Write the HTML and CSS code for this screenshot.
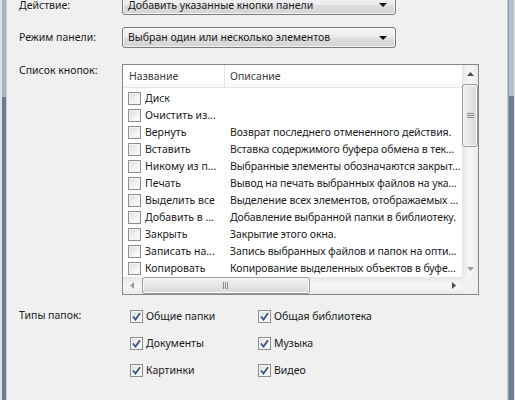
FILE: index.html
```html
<!DOCTYPE html>
<html lang="ru">
<head>
<meta charset="utf-8">
<link rel="stylesheet" href="styles.css">
</head>
<body>
<div class="window">
  <div class="frame frame-left"></div>
  <div class="content">
    <div class="row row-action">
      <div class="label">Действие:</div>
      <div class="combo"><span class="combo-text">Добавить указанные кнопки панели</span><span class="arrow"></span></div>
    </div>
    <div class="row row-mode">
      <div class="label">Режим панели:</div>
      <div class="combo"><span class="combo-text">Выбран один или несколько элементов</span><span class="arrow"></span></div>
    </div>
    <div class="row row-list">
      <div class="label label-top">Список кнопок:</div>
      <div class="listview">
        <div class="lv-main">
          <div class="lv-header">
            <div class="col-name hdr">Название</div>
            <div class="col-desc hdr">Описание</div>
          </div>
          <div class="lv-rows">
            <div class="lv-row"><div class="col-name"><span class="cb"></span>Диск</div><div class="col-desc"></div></div>
            <div class="lv-row"><div class="col-name"><span class="cb"></span>Очистить из...</div><div class="col-desc"></div></div>
            <div class="lv-row"><div class="col-name"><span class="cb"></span>Вернуть</div><div class="col-desc">Возврат последнего отмененного действия.</div></div>
            <div class="lv-row"><div class="col-name"><span class="cb"></span>Вставить</div><div class="col-desc">Вставка содержимого буфера обмена в тек...</div></div>
            <div class="lv-row"><div class="col-name"><span class="cb"></span>Никому из п...</div><div class="col-desc">Выбранные элементы обозначаются закрыт...</div></div>
            <div class="lv-row"><div class="col-name"><span class="cb"></span>Печать</div><div class="col-desc">Вывод на печать выбранных файлов на ука...</div></div>
            <div class="lv-row"><div class="col-name"><span class="cb"></span>Выделить все</div><div class="col-desc">Выделение всех элементов, отображаемых ...</div></div>
            <div class="lv-row"><div class="col-name"><span class="cb"></span>Добавить в ...</div><div class="col-desc">Добавление выбранной папки в библиотеку.</div></div>
            <div class="lv-row"><div class="col-name"><span class="cb"></span>Закрыть</div><div class="col-desc">Закрытие этого окна.</div></div>
            <div class="lv-row"><div class="col-name"><span class="cb"></span>Записать на...</div><div class="col-desc">Запись выбранных файлов и папок на опти...</div></div>
            <div class="lv-row"><div class="col-name"><span class="cb"></span>Копировать</div><div class="col-desc">Копирование выделенных объектов в буфе...</div></div>
          </div>
        </div>
        <div class="vscroll">
          <div class="sb-btn"><svg width="7" height="4" viewBox="0 0 7 4"><path d="M0 4 L3.5 0 L7 4 Z" fill="#4d4d4d"/></svg></div>
          <div class="vthumb"><svg width="7" height="6" viewBox="0 0 7 6"><path d="M0 0.5H7M0 2.5H7M0 4.5H7" stroke="#8a8a8a" stroke-width="1"/></svg></div>
          <div class="vtrack"></div>
          <div class="sb-btn"><svg width="7" height="4" viewBox="0 0 7 4"><path d="M0 0 L3.5 4 L7 0 Z" fill="#9a9a9a"/></svg></div>
        </div>
        <div class="hscroll">
          <div class="sb-btn"><svg width="4" height="7" viewBox="0 0 4 7"><path d="M4 0 L0 3.5 L4 7 Z" fill="#9a9a9a"/></svg></div>
          <div class="hthumb"><svg width="6" height="7" viewBox="0 0 6 7"><path d="M0.5 0V7M2.5 0V7M4.5 0V7" stroke="#8a8a8a" stroke-width="1"/></svg></div>
          <div class="htrack"></div>
          <div class="sb-btn"><svg width="4" height="7" viewBox="0 0 4 7"><path d="M0 0 L4 3.5 L0 7 Z" fill="#4d4d4d"/></svg></div>
        </div>
        <div class="corner"></div>
      </div>
    </div>
    <div class="row row-types">
      <div class="label label-top">Типы папок:</div>
      <div class="types">
        <div class="chk"><span class="cb on"><svg width="9" height="9" viewBox="0 0 9 9"><path d="M1 4.5 L3.5 7.5 L8 1.2" fill="none" stroke="#3b5580" stroke-width="1.8"/></svg></span>Общие папки</div>
        <div class="chk"><span class="cb on"><svg width="9" height="9" viewBox="0 0 9 9"><path d="M1 4.5 L3.5 7.5 L8 1.2" fill="none" stroke="#3b5580" stroke-width="1.8"/></svg></span>Общая библиотека</div>
        <div class="chk"><span class="cb on"><svg width="9" height="9" viewBox="0 0 9 9"><path d="M1 4.5 L3.5 7.5 L8 1.2" fill="none" stroke="#3b5580" stroke-width="1.8"/></svg></span>Документы</div>
        <div class="chk"><span class="cb on"><svg width="9" height="9" viewBox="0 0 9 9"><path d="M1 4.5 L3.5 7.5 L8 1.2" fill="none" stroke="#3b5580" stroke-width="1.8"/></svg></span>Музыка</div>
        <div class="chk"><span class="cb on"><svg width="9" height="9" viewBox="0 0 9 9"><path d="M1 4.5 L3.5 7.5 L8 1.2" fill="none" stroke="#3b5580" stroke-width="1.8"/></svg></span>Картинки</div>
        <div class="chk"><span class="cb on"><svg width="9" height="9" viewBox="0 0 9 9"><path d="M1 4.5 L3.5 7.5 L8 1.2" fill="none" stroke="#3b5580" stroke-width="1.8"/></svg></span>Видео</div>
      </div>
    </div>
  </div>
  <div class="frame frame-right"></div>
</div>
</body>
</html>
```

FILE: styles.css
```css
* { box-sizing: border-box; }
html, body { margin: 0; padding: 0; }
body {
  width: 515px;
  height: 400px;
  overflow: hidden;
  background: #f0f0f0;
  font-family: "Noto Sans", "DejaVu Sans", sans-serif;
  font-size: 10.5px;
  color: #1a1a1a;
}
.window {
  display: flex;
  height: 400px;
}
.frame {
  width: 8px;
  flex: none;
}
.frame-left {
  background:
    linear-gradient(to right, #dfe3e9 0, #dfe3e9 2px, transparent 2px, transparent 6px, #c9d0da 6px, #c9d0da 7px, #f0f0f0 7px),
    linear-gradient(to bottom, #a9b5c6 0, #a9b5c6 97px, #6c7b92 97px, #6c7b92 100%);
}
.frame-right {
  background:
    linear-gradient(to right, #c3cad4 0, #c3cad4 1px, #8e9aab 1px, #8e9aab 2px, transparent 2px, transparent 7px, #dfe3e9 7px),
    linear-gradient(to bottom, #b4c0d0 0, #b4c0d0 96px, #6f7f97 96px, #6f7f97 100%);
}
.content {
  flex: 1;
  display: flex;
  flex-direction: column;
}
.row {
  display: flex;
  align-items: center;
}
.label {
  width: 114px;
  flex: none;
  padding-left: 11px;
  line-height: 15px;
}
.label-top { align-self: flex-start; }
.row-action { margin-top: -5px; }
.row-action .label { margin-top: 1px; }
.row-mode { margin-top: 12px; }
.row-list { margin-top: 16px; }
.row-list .label-top { margin-top: -1px; }
.row-types { margin-top: 14px; align-items: flex-start; }
.row-types .label-top { margin-top: -1px; }

.combo {
  width: 274px;
  height: 21px;
  border: 1px solid #7a7a7a;
  border-radius: 3px;
  background: linear-gradient(to bottom, #f4f4f4 0%, #ececec 48%, #dedede 52%, #d4d4d4 100%);
  box-shadow: inset 0 0 0 1px rgba(255,255,255,0.7);
  display: flex;
  align-items: center;
  justify-content: space-between;
  padding: 0 5px 0 5px;
}
.row-action .combo { height: 20px; }
.combo-text { line-height: 15px; }
.arrow {
  width: 0;
  height: 0;
  border-left: 4px solid transparent;
  border-right: 4px solid transparent;
  border-top: 4px solid #111;
  margin-right: 3px;
}

.listview {
  width: 357px;
  height: 231px;
  border: 1px solid #828790;
  background: #fff;
  display: grid;
  grid-template-columns: 339px 16px;
  grid-template-rows: 212px 17px;
}
.lv-main {
  overflow: hidden;
  white-space: nowrap;
}
.lv-header {
  display: flex;
  height: 23px;
  border-bottom: 1px solid #e5e5e5;
  background: linear-gradient(to bottom, #ffffff 0%, #ffffff 60%, #f7f8fa 100%);
}
.col-name {
  width: 102px;
  flex: none;
  display: flex;
  align-items: center;
  padding-left: 5px;
  overflow: hidden;
}
.col-desc {
  flex: 1;
  display: flex;
  align-items: center;
  padding-left: 5px;
}
.hdr { color: #3c3c3c; padding-left: 6px; }
.lv-header .col-name { border-right: 1px solid #e5e5e5; }
.lv-header .col-desc { padding-left: 5px; }
.lv-rows { padding-top: 2px; }
.lv-row {
  display: flex;
  height: 17px;
  line-height: 15px;
}
.lv-row .col-desc { padding-left: 5px; letter-spacing: -0.1px; }
.lv-row .col-name { width: 102px; }

.cb {
  width: 13px;
  height: 13px;
  flex: none;
  border: 1px solid #8f8f8f;
  background: linear-gradient(135deg, #dcdcdc 0%, #f3f3f3 60%, #fdfdfd 100%);
  box-shadow: inset 0 0 0 1px #f4f4f4;
  margin-right: 4px;
  display: inline-flex;
  align-items: center;
  justify-content: center;
}

.vscroll {
  grid-column: 2;
  grid-row: 1;
  display: flex;
  flex-direction: column;
  background: linear-gradient(to right, #e6e6e6, #f5f5f5 40%, #f5f5f5 60%, #e9e9e9);
}
.sb-btn {
  width: 16px;
  height: 17px;
  flex: none;
  display: flex;
  align-items: center;
  justify-content: center;
}
.vthumb {
  height: 63px;
  flex: none;
  margin-top: 2px;
  border: 1px solid #9b9b9b;
  border-radius: 3px;
  background: linear-gradient(to right, #f0f0f0, #e6e6e6 50%, #d9d9d9);
  box-shadow: inset 0 0 0 1px #fafafa;
  display: flex;
  align-items: center;
  justify-content: center;
}
.vtrack { flex: 1; }
.hscroll {
  grid-column: 1;
  grid-row: 2;
  display: flex;
  background: linear-gradient(to bottom, #e6e6e6, #f5f5f5 40%, #f5f5f5 60%, #e9e9e9);
}
.hscroll .sb-btn { width: 17px; height: 17px; }
.hthumb {
  width: 168px;
  flex: none;
  height: 17px;
  margin-left: 2px;
  border: 1px solid #9b9b9b;
  border-radius: 3px;
  background: linear-gradient(to bottom, #f0f0f0, #e6e6e6 50%, #d9d9d9);
  box-shadow: inset 0 0 0 1px #fafafa;
  display: flex;
  align-items: center;
  justify-content: center;
}
.htrack { flex: 1; }
.corner {
  grid-column: 2;
  grid-row: 2;
  background: #f0f0f0;
}

.types {
  display: grid;
  grid-template-columns: 128px 140px;
  row-gap: 12px;
  padding-left: 8px;
}
.chk {
  display: flex;
  align-items: center;
  height: 15px;
  line-height: 15px;
}
.chk .cb { margin-right: 3px; }
```
